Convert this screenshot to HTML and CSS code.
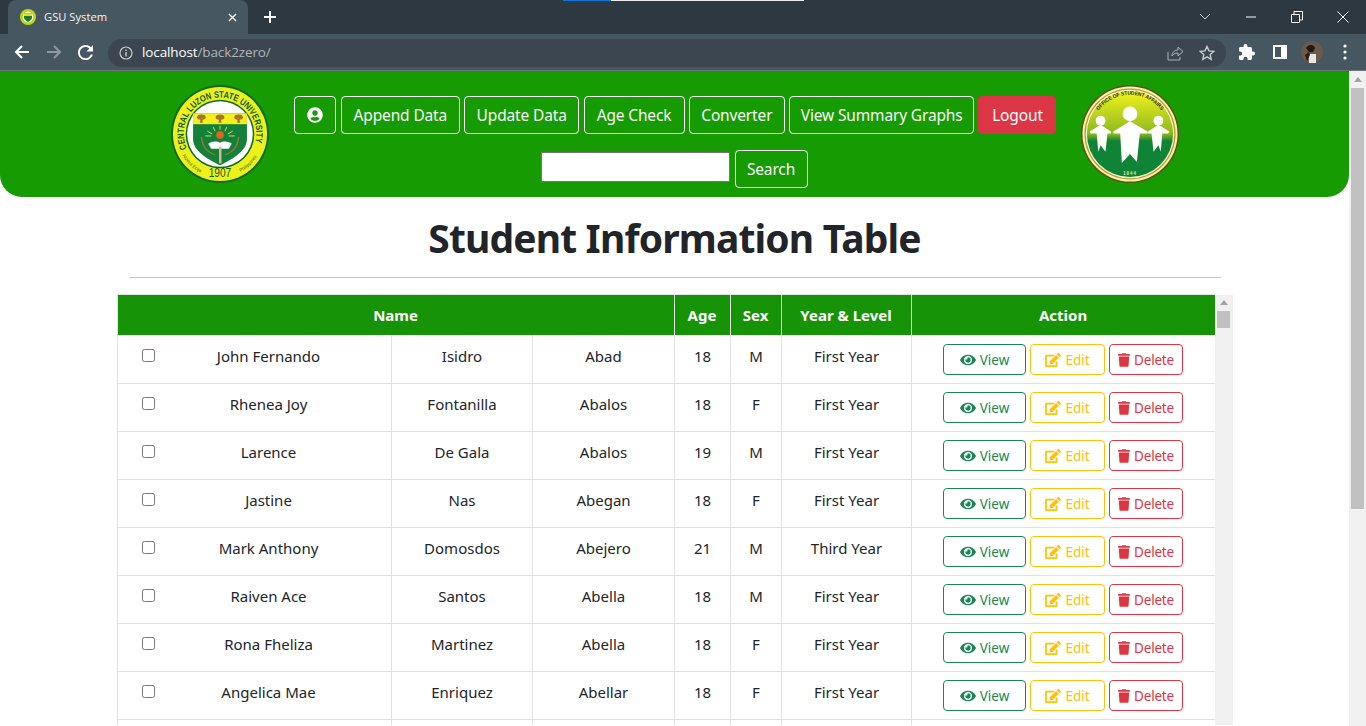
FILE: index.html
```html
<!DOCTYPE html>
<html lang="en">
<head>
<meta charset="utf-8">
<title>GSU System</title>
<link rel="stylesheet" href="styles.css">
</head>
<body>
<svg class="sprite" aria-hidden="true">
  <symbol id="i-eye" viewBox="0 0 576 512"><path fill="currentColor" d="M572.500 241.400C518.300 135.600 410.900 64 288 64S57.700 135.600 3.500 241.400a32.400 32.400 0 0 0 0 29.200C57.700 376.400 165.100 448 288 448s230.300-71.600 284.500-177.400a32.400 32.400 0 0 0 0-29.200zM288 400a144 144 0 1 1 144-144 143.900 143.900 0 0 1-144 144zm0-240a95.300 95.300 0 0 0-25.300 3.800 47.900 47.900 0 0 1-66.900 66.900A95.800 95.800 0 1 0 288 160z"/></symbol>
  <symbol id="i-edit" viewBox="0 0 576 512"><path fill="currentColor" d="M402.600 83.200l90.200 90.200c3.800 3.800 3.800 10 0 13.800L274.400 405.600l-92.800 10.300c-12.400 1.400-22.900-9.100-21.500-21.500l10.300-92.800L388.800 83.200c3.800-3.800 10-3.800 13.800 0zm162-22.900l-48.800-48.800c-15.200-15.200-39.900-15.200-55.200 0l-35.400 35.400c-3.800 3.800-3.800 10 0 13.800l90.200 90.200c3.800 3.800 10 3.800 13.800 0l35.400-35.400c15.200-15.300 15.200-40 0-55.200zM384 346.200V448H64V128h229.800c3.200 0 6.200-1.300 8.500-3.500l40-40c7.600-7.600 2.200-20.500-8.500-20.500H48C21.500 64 0 85.500 0 112v352c0 26.500 21.500 48 48 48h352c26.500 0 48-21.500 48-48V306.200c0-10.700-12.900-16-20.500-8.500l-40 40c-2.200 2.300-3.500 5.300-3.500 8.500z"/></symbol>
  <symbol id="i-trash" viewBox="0 0 448 512"><path fill="currentColor" d="M432 32H312l-9.400-18.700A24 24 0 0 0 281.100 0H166.800a23.700 23.700 0 0 0-21.400 13.300L136 32H16A16 16 0 0 0 0 48v32a16 16 0 0 0 16 16h416a16 16 0 0 0 16-16V48a16 16 0 0 0-16-16zM53.200 467a48 48 0 0 0 47.900 45h245.800a48 48 0 0 0 47.900-45L416 128H32z"/></symbol>
</svg>
<div class="chrome">
  <div class="load-strip"><span class="load-blue"></span><span class="load-white"></span></div>
  <div class="tabstrip">
    <div class="tab">
      <svg class="favicon" viewBox="0 0 16 16"><circle cx="8" cy="8" r="8" fill="#b5d90f"/><circle cx="8" cy="8" r="5.400" fill="#fff"/><path d="M4 4.500h8v4c0 2-2 3.400-4 4.400-2-1-4-2.400-4-4.400z" fill="#1c7a2c"/><rect x="4" y="4.500" width="8" height="2.500" fill="#e8d820"/></svg>
      <span class="tab-title">GSU System</span>
      <svg class="tab-close" viewBox="0 0 10 10"><path d="M1 1l8 8M9 1l-8 8" stroke="#fff" stroke-width="1.600"/></svg>
    </div>
    <svg class="new-tab" viewBox="0 0 12 12"><path d="M6 0v12M0 6h12" stroke="#fff" stroke-width="2"/></svg>
    <div class="win-controls">
      <svg class="win-icon chevron" viewBox="0 0 12 8"><path d="M1 1l5 5 5-5" fill="none" stroke="#c7ccd0" stroke-width="1"/></svg>
      <svg class="win-icon minimize" viewBox="0 0 12 12"><path d="M1 6h10" stroke="#fff" stroke-width="1"/></svg>
      <svg class="win-icon restore" viewBox="0 0 12 12"><path d="M.5 3.500h8v8h-8zM3 3V.5h8.500V9H9" fill="none" stroke="#fff" stroke-width="1"/></svg>
      <svg class="win-icon close" viewBox="0 0 12 12"><path d="M.5.5l11 11M11.500.5l-11 11" stroke="#fff" stroke-width="1"/></svg>
    </div>
  </div>
  <div class="toolbar">
    <svg class="nav-icon" viewBox="0 0 16 16"><path d="M15 8H2M8 2L2 8l6 6" fill="none" stroke="#fff" stroke-width="2"/></svg>
    <svg class="nav-icon" viewBox="0 0 16 16"><path d="M1 8h13M8 2l6 6-6 6" fill="none" stroke="#8f989e" stroke-width="2"/></svg>
    <svg class="nav-icon nav-reload" viewBox="4 4 16 16"><path fill="#fff" d="M17.650 6.350C16.200 4.900 14.210 4 12 4c-4.420 0-7.990 3.580-7.990 8s3.570 8 7.990 8c3.730 0 6.840-2.550 7.730-6h-2.080c-.82 2.330-3.040 4-5.650 4-3.310 0-6-2.690-6-6s2.690-6 6-6c1.660 0 3.140.69 4.220 1.780L13 11h7V4l-2.350 2.350z"/></svg>
    <div class="omnibox">
      <svg class="info-icon" viewBox="0 0 14 14"><circle cx="7" cy="7" r="6" fill="none" stroke="#c7ccd0" stroke-width="1.200"/><path d="M7 6v4.500M7 3.500v1.400" stroke="#c7ccd0" stroke-width="1.400"/></svg>
      <span class="url"><span class="url-host">localhost</span>/back2zero/</span>
      <svg class="omni-icon" viewBox="0 0 16 16"><path d="M1 7v8h12v-3" fill="none" stroke="#aab2b7" stroke-width="1"/><path d="M5 11c0-4 3-6 6-6V2l5 4.500-5 4.500V8c-3 0-5 1-6 3z" fill="none" stroke="#aab2b7" stroke-width="1"/></svg>
      <svg class="omni-icon" viewBox="0 0 16 16"><path d="M8 1.500l2 4.400 4.800.5-3.600 3.200 1 4.700L8 11.900l-4.200 2.400 1-4.700L1.200 6.400 6 5.900z" fill="none" stroke="#c7ccd0" stroke-width="1.400"/></svg>
    </div>
    <svg class="ext-icon" viewBox="2 1 21 21"><path fill="#fff" d="M20.500 11H19V7c0-1.100-.9-2-2-2h-4V3.500C13 2.120 11.880 1 10.500 1S8 2.120 8 3.500V5H4c-1.100 0-1.990.9-1.990 2v3.800H3.500c1.490 0 2.700 1.210 2.700 2.700s-1.210 2.700-2.700 2.700H2V20c0 1.100.9 2 2 2h3.800v-1.500c0-1.490 1.210-2.700 2.700-2.700 1.490 0 2.700 1.210 2.700 2.700V22H17c1.100 0 2-.9 2-2v-4h1.500c1.380 0 2.500-1.120 2.500-2.500S21.880 11 20.500 11z"/></svg>
    <svg class="side-icon" viewBox="0 0 14 14"><path d="M0 0h14v14H0zM2 2v10h6V2z" fill="#fff" fill-rule="evenodd"/></svg>
    <svg class="avatar" viewBox="0 0 22 22"><circle cx="11" cy="11" r="11" fill="#6b5a4a"/><path d="M5 7c2-4 8-4 9 0l-2 4H8z" fill="#1d1a18"/><path d="M8 22v-9h7v9z" fill="#e9e6e1"/><path d="M4 14l4-3 1 3-3 6z" fill="#26211e"/></svg>
    <svg class="menu-dots" viewBox="0 0 4 16"><circle cx="2" cy="2" r="1.600" fill="#fff"/><circle cx="2" cy="8" r="1.600" fill="#fff"/><circle cx="2" cy="14" r="1.600" fill="#fff"/></svg>
  </div>
</div>

<div class="viewport">
  <main class="page">
    <header class="site-header">
      <svg class="logo" viewBox="0 0 100 100">
        <defs>
          <path id="clsu-arc" d="M16.200 65A37 37 0 1 1 85.700 59.600"/>
          <path id="clsu-left" d="M11.900 72A44 44 0 0 0 30 89.200"/>
          <path id="clsu-right" d="M70 89.200A44 44 0 0 0 88.100 72"/>
        </defs>
        <circle cx="50" cy="50" r="50" fill="#0d6b26"/>
        <circle cx="50" cy="50" r="48" fill="#eef01a"/>
        <circle cx="50" cy="50" r="35" fill="#0d6b26"/>
        <circle cx="50" cy="50" r="33.500" fill="#fff"/>
        <text class="seal-text"><textPath href="#clsu-arc" textLength="140" lengthAdjust="spacingAndGlyphs">CENTRAL LUZON STATE UNIVERSITY</textPath></text>
        <text class="seal-small"><textPath href="#clsu-left" startOffset="50%" text-anchor="middle">Nueva Ecija</textPath></text>
        <text class="seal-small"><textPath href="#clsu-right" startOffset="50%" text-anchor="middle">Philippines</textPath></text>
        <text class="seal-year" x="38.500" y="94" textLength="23" lengthAdjust="spacingAndGlyphs">1907</text>
        <path d="M22.500 29h55v26c0 12-14 20-27.500 27C36.500 75 22.500 67 22.500 55z" fill="#14813a"/>
        <rect x="22.500" y="29" width="55" height="11" fill="#f3ee1c"/>
        <g fill="#a5752b"><path d="M26.500 33a4.500 3 0 0 1 9 0 4 2.500 0 0 1-3.500 2.500l.5 3h-3l.5-3a4 2.500 0 0 1-3.500-2.500z"/><path d="M45.500 33a4.500 3 0 0 1 9 0 4 2.500 0 0 1-3.500 2.500l.5 3h-3l.5-3a4 2.500 0 0 1-3.500-2.500z"/><path d="M64.500 33a4.500 3 0 0 1 9 0 4 2.500 0 0 1-3.500 2.500l.5 3h-3l.5-3a4 2.500 0 0 1-3.500-2.500z"/></g>
        <g stroke="#e9ec3a" stroke-width=".9"><path d="M50 41.500v4M43 43l2 4M57 43l-2 4M37 47l5 3M63 47l-5 3M35 52h6M65 52h-6"/></g>
        <circle cx="50" cy="51" r="3.800" fill="#e8641b"/>
        <path d="M38 60c4-3 9-3 12-1 3-2 8-2 12 1l-3 5H41z" fill="#fff"/>
        <path d="M49 63h2.500v17H49z" fill="#d3bb94"/>
        <path d="M31 53c1 10 6 16 14 18M69 53c-1 10-6 16-14 18" fill="none" stroke="#a5752b" stroke-width="1.300"/>
      </svg>
      <div class="nav-stack">
        <nav class="nav-row">
          <button class="btn btn-icon"><svg class="user-icon" viewBox="0 0 512 512"><path fill="#fff" d="M256 8C119 8 8 119 8 256s111 248 248 248 248-111 248-248S393 8 256 8zm0 96c48.600 0 88 39.400 88 88s-39.400 88-88 88-88-39.400-88-88 39.400-88 88-88zm0 344c-58.700 0-111.300-26.600-146.500-68.200 18.800-35.400 55.600-59.800 98.500-59.800 2.400 0 4.800.4 7.100 1.100 13 4.200 26.600 6.900 40.900 6.900 14.300 0 28-2.700 40.900-6.900 2.300-.7 4.700-1.100 7.100-1.100 42.900 0 79.700 24.400 98.500 59.800C367.300 421.400 314.700 448 256 448z"/></svg></button>
          <button class="btn btn-append">Append Data</button>
          <button class="btn btn-update">Update Data</button>
          <button class="btn btn-age">Age Check</button>
          <button class="btn btn-convert">Converter</button>
          <button class="btn btn-summary">View Summary Graphs</button>
          <button class="btn btn-logout">Logout</button>
        </nav>
        <form class="search-row">
          <input class="search-input" type="text" aria-label="Search">
          <button class="btn btn-search" type="button">Search</button>
        </form>
      </div>
      <svg class="logo" viewBox="0 0 100 100">
        <defs>
          <path id="osa-arc" d="M10 50A40 40 0 0 1 90 50"/>
          <linearGradient id="osa-grad" x1="0" x2="0" y1="0" y2="1"><stop offset="0" stop-color="#f4f21c"/><stop offset=".5" stop-color="#8ab81e"/><stop offset=".58" stop-color="#0f8436"/><stop offset="1" stop-color="#0f8436"/></linearGradient>
        </defs>
        <circle cx="50" cy="50" r="50" fill="#5e5216"/>
        <circle cx="50" cy="50" r="48.500" fill="#f6f3b0"/>
        <circle cx="50" cy="50" r="46.500" fill="#b99f20"/>
        <circle cx="50" cy="50" r="45.200" fill="#fbfadc"/>
        <circle cx="50" cy="50" r="44" fill="url(#osa-grad)"/>
        <text class="osa-text"><textPath href="#osa-arc" startOffset="50%" text-anchor="middle" textLength="74" lengthAdjust="spacingAndGlyphs">OFFICE OF STUDENT AFFAIRS</textPath></text>
        <text class="osa-year" x="50" y="91.500" text-anchor="middle">1944</text>
        <g class="osa-people" fill="#fff">
          <circle cx="50" cy="26" r="7.500"/>
          <path d="M50 33.500L33 44v2h7l1.700 30L50 67l7 8 3-29h8v-2z"/>
          <circle cx="20" cy="33" r="5"/>
          <path d="M20 37L9 44l1 2h6l1.600 18.500L20 58l5 6.500L27 46h3.500v-2z"/>
          <circle cx="79" cy="33" r="5"/>
          <path d="M79 37l11 7-1 2h-6l-1.600 18.500L79 58l-5 6.500L72 46h-3.500v-2z"/>
        </g>
      </svg>
    </header>

    <h1 class="page-title">Student Information Table</h1>
    <hr class="divider">

    <section class="table-wrap">
      <table class="students">
        <colgroup>
          <col class="c-check"><col class="c-first"><col class="c-mid"><col class="c-last"><col class="c-age"><col class="c-sex"><col class="c-year"><col class="c-action">
        </colgroup>
        <thead>
          <tr><th colspan="4">Name</th><th>Age</th><th>Sex</th><th>Year &amp; Level</th><th class="th-last">Action</th></tr>
        </thead>
        <tbody>
          <tr><td class="td-check"><input type="checkbox" class="check"></td><td class="td-first">John Fernando</td><td>Isidro</td><td>Abad</td><td>18</td><td>M</td><td>First Year</td><td class="td-action"><div class="actions"><a class="act act-view"><svg class="act-icon icon-wide"><use href="#i-eye"/></svg>View</a><a class="act act-edit"><svg class="act-icon icon-wide"><use href="#i-edit"/></svg>Edit</a><a class="act act-delete"><svg class="act-icon icon-trash"><use href="#i-trash"/></svg>Delete</a></div></td></tr>
          <tr><td class="td-check"><input type="checkbox" class="check"></td><td class="td-first">Rhenea Joy</td><td>Fontanilla</td><td>Abalos</td><td>18</td><td>F</td><td>First Year</td><td class="td-action"><div class="actions"><a class="act act-view"><svg class="act-icon icon-wide"><use href="#i-eye"/></svg>View</a><a class="act act-edit"><svg class="act-icon icon-wide"><use href="#i-edit"/></svg>Edit</a><a class="act act-delete"><svg class="act-icon icon-trash"><use href="#i-trash"/></svg>Delete</a></div></td></tr>
          <tr><td class="td-check"><input type="checkbox" class="check"></td><td class="td-first">Larence</td><td>De Gala</td><td>Abalos</td><td>19</td><td>M</td><td>First Year</td><td class="td-action"><div class="actions"><a class="act act-view"><svg class="act-icon icon-wide"><use href="#i-eye"/></svg>View</a><a class="act act-edit"><svg class="act-icon icon-wide"><use href="#i-edit"/></svg>Edit</a><a class="act act-delete"><svg class="act-icon icon-trash"><use href="#i-trash"/></svg>Delete</a></div></td></tr>
          <tr><td class="td-check"><input type="checkbox" class="check"></td><td class="td-first">Jastine</td><td>Nas</td><td>Abegan</td><td>18</td><td>F</td><td>First Year</td><td class="td-action"><div class="actions"><a class="act act-view"><svg class="act-icon icon-wide"><use href="#i-eye"/></svg>View</a><a class="act act-edit"><svg class="act-icon icon-wide"><use href="#i-edit"/></svg>Edit</a><a class="act act-delete"><svg class="act-icon icon-trash"><use href="#i-trash"/></svg>Delete</a></div></td></tr>
          <tr><td class="td-check"><input type="checkbox" class="check"></td><td class="td-first">Mark Anthony</td><td>Domosdos</td><td>Abejero</td><td>21</td><td>M</td><td>Third Year</td><td class="td-action"><div class="actions"><a class="act act-view"><svg class="act-icon icon-wide"><use href="#i-eye"/></svg>View</a><a class="act act-edit"><svg class="act-icon icon-wide"><use href="#i-edit"/></svg>Edit</a><a class="act act-delete"><svg class="act-icon icon-trash"><use href="#i-trash"/></svg>Delete</a></div></td></tr>
          <tr><td class="td-check"><input type="checkbox" class="check"></td><td class="td-first">Raiven Ace</td><td>Santos</td><td>Abella</td><td>18</td><td>M</td><td>First Year</td><td class="td-action"><div class="actions"><a class="act act-view"><svg class="act-icon icon-wide"><use href="#i-eye"/></svg>View</a><a class="act act-edit"><svg class="act-icon icon-wide"><use href="#i-edit"/></svg>Edit</a><a class="act act-delete"><svg class="act-icon icon-trash"><use href="#i-trash"/></svg>Delete</a></div></td></tr>
          <tr><td class="td-check"><input type="checkbox" class="check"></td><td class="td-first">Rona Fheliza</td><td>Martinez</td><td>Abella</td><td>18</td><td>F</td><td>First Year</td><td class="td-action"><div class="actions"><a class="act act-view"><svg class="act-icon icon-wide"><use href="#i-eye"/></svg>View</a><a class="act act-edit"><svg class="act-icon icon-wide"><use href="#i-edit"/></svg>Edit</a><a class="act act-delete"><svg class="act-icon icon-trash"><use href="#i-trash"/></svg>Delete</a></div></td></tr>
          <tr><td class="td-check"><input type="checkbox" class="check"></td><td class="td-first">Angelica Mae</td><td>Enriquez</td><td>Abellar</td><td>18</td><td>F</td><td>First Year</td><td class="td-action"><div class="actions"><a class="act act-view"><svg class="act-icon icon-wide"><use href="#i-eye"/></svg>View</a><a class="act act-edit"><svg class="act-icon icon-wide"><use href="#i-edit"/></svg>Edit</a><a class="act act-delete"><svg class="act-icon icon-trash"><use href="#i-trash"/></svg>Delete</a></div></td></tr>
          <tr><td class="td-check"></td><td></td><td></td><td></td><td></td><td></td><td></td><td></td></tr>
        </tbody>
      </table>
      <div class="inner-scroll"><span class="arrow"></span><span class="inner-thumb"></span></div>
    </section>
  </main>
  <aside class="page-scroll"><span class="arrow"></span><span class="page-thumb"></span></aside>
</div>
</body>
</html>
```

FILE: styles.css
```css
* { box-sizing: border-box; }
html, body { margin: 0; height: 726px; overflow: hidden; background: #fff; }
body { display: flex; flex-direction: column; font-family: "Noto Sans", "Open Sans", sans-serif; color: #212529; }
.sprite { position: absolute; width: 0; height: 0; }

/* browser chrome */
.chrome { height: 71px; flex: none; background: #475761; position: relative; font-family: "Open Sans", "Noto Sans", sans-serif; border-bottom: 1px solid #6e7478; }
.load-strip { position: absolute; top: 0; left: 563px; display: flex; height: 1px; z-index: 2; }
.load-blue { width: 48px; background: #0a78d8; }
.load-white { width: 193px; background: #e9ecee; }
.tabstrip { height: 34px; background: #2d3840; display: flex; align-items: center; padding-left: 8px; }
.tab { width: 240px; height: 34px; background: #475761; border-radius: 8px 8px 0 0; display: flex; align-items: center; padding: 0 0 0 12px; }
.favicon { width: 16px; height: 16px; flex: none; }
.tab-title { margin: 0 0 2px 8px; color: #f2f4f5; font-size: 11.200px; flex: 1; white-space: nowrap; }
.tab-close { width: 9px; height: 9px; margin-right: 11px; flex: none; }
.new-tab { width: 12px; height: 12px; margin-left: 16px; }
.win-controls { margin-left: auto; display: flex; align-items: center; height: 34px; }
.win-icon { width: 12px; height: 12px; flex: none; }
.chevron { margin-right: 34px; height: 8px; }
.minimize { margin-right: 34px; }
.restore { margin-right: 34px; }
.close { margin-right: 17px; }
.toolbar { height: 36px; display: flex; align-items: center; padding: 0 0 0 14px; }
.nav-icon { width: 16px; height: 16px; margin-right: 16px; flex: none; }
.nav-icon.nav-reload { width: 15px; height: 15px; margin: 0 15px 0 0; }
.omnibox { width: 1118px; height: 28px; margin-top: 1px; background: #3b4650; border-radius: 14px; display: flex; align-items: center; padding: 0 11px; flex: none; }
.info-icon { width: 14px; height: 14px; flex: none; }
.url { margin: 0 0 2px 9px; font-size: 13.500px; color: #aeb6bb; flex: 1; white-space: nowrap; letter-spacing: -.12px; }
.url-host { color: #fff; }
.omni-icon { width: 16px; height: 16px; margin-left: 16px; flex: none; }
.ext-icon { width: 16px; height: 16px; margin-left: 13px; flex: none; }
.side-icon { width: 14px; height: 14px; margin-left: 18px; flex: none; }
.avatar { width: 22px; height: 22px; margin-left: 14px; flex: none; }
.menu-dots { width: 4px; height: 16px; margin-left: 20px; flex: none; }

/* page */
.viewport { flex: 1; display: flex; min-height: 0; }
.page { width: 1349px; flex: none; overflow: hidden; }
.page-scroll { width: 17px; flex: none; background: #f1f1f1; display: flex; flex-direction: column; align-items: center; padding-top: 6px; }
.arrow { width: 0; height: 0; border: 4px solid transparent; border-top: 0; border-bottom: 5px solid #a3a3a3; flex: none; }
.page-thumb { width: 13px; height: 421px; background: #c1c1c1; margin-top: 6px; }

.site-header { height: 126px; background: #179b03; border-radius: 0 0 22px 22px; display: flex; justify-content: center; gap: 25px; padding-top: 14px; }
.logo { width: 98px; height: 98px; flex: none; }
.seal-text { font: 700 9.500px "Liberation Sans", sans-serif; fill: #0d5d22; }
.seal-small { font: 400 4.800px "Liberation Sans", sans-serif; fill: #2c6b22; }
.seal-year { font: 400 13.500px "Liberation Sans", sans-serif; fill: #0d5d22; }
.osa-text { font: 700 5.500px "Liberation Sans", sans-serif; fill: #2b2d12; }
.osa-year { font: 700 4.500px "Liberation Sans", sans-serif; fill: #e8e6a8; letter-spacing: 1px; }
.osa-people { transform: translateY(3.500px); }

.nav-stack { width: 762px; padding-top: 11px; display: flex; flex-direction: column; align-items: center; gap: 16px; flex: none; }
.nav-row { display: flex; gap: 4.330px; margin-left: 1px; }
.btn { height: 38px; padding: 1px 0 0; background: transparent; border: 1px solid #f8f9fa; border-radius: 4px; color: #f8f9fa; font: 400 15.500px/1 "Noto Sans", "Open Sans", sans-serif; letter-spacing: -.15px; display: flex; align-items: center; justify-content: center; white-space: nowrap; }
.btn-icon { width: 42px; padding: 0; margin-right: 1px; }
.user-icon { width: 16px; height: 16px; }
.btn-append { width: 119px; }
.btn-update { width: 115px; }
.btn-age { width: 101px; }
.btn-convert { width: 96px; }
.btn-summary { width: 185px; }
.btn-logout { width: 78px; background: #dc3545; border-color: #dc3545; color: #fff; }
.search-row { display: flex; align-items: flex-start; gap: 5px; margin: 0 1px 0 0; }
.search-input { width: 189px; height: 30px; margin-top: 2px; background: #fff; border: 1px solid #767676; padding: 1px 2px; }
.btn-search { width: 73px; }

.page-title { margin: 17px 0 0; text-align: center; font-size: 39px; line-height: 48px; font-weight: 700; letter-spacing: -.85px; }
.divider { width: 1092px; height: 1px; margin: 15px auto 16px; border: 0; background: #c8c9ca; }

.table-wrap { width: 1116px; margin: 0 auto; padding-top: 1px; display: flex; height: 431px; overflow: hidden; border-left: 1px solid #dee2e6; }
.students { width: 1097px; table-layout: fixed; border-collapse: separate; border-spacing: 0; font-size: 15px; flex: none; align-self: flex-start; border-top: 1px solid #dee2e6; margin-top: -1px; }
.c-check { width: 62px; }
.c-first { width: 212px; }
.c-mid { width: 141px; }
.c-last { width: 142px; }
.c-age { width: 56px; }
.c-sex { width: 51px; }
.c-year { width: 130px; }
.c-action { width: 303px; }
.students th { height: 40px; background: #169306; color: #fff; font-weight: 700; font-size: 15px; border-right: 1px solid #dde5dc; text-align: center; vertical-align: middle; padding: 0; }
.students th.th-last { border-right: 0; }
.students td { height: 48px; padding: 8px 0 7px 1px; text-align: center; vertical-align: top; border-bottom: 1px solid #dee2e6; border-right: 1px solid #dee2e6; line-height: 24px; }
.students tbody tr:first-child td { height: 49px; padding-top: 9px; }
.students td:last-child { border-right: 0; padding-left: 0; }
.students td.td-check { border-right: 0; text-align: left; padding-left: 24px; line-height: 0; }
.students td.td-first { padding-right: 34px; }
.check { width: 13px; height: 13px; margin: 5px 0 0; }
.actions { display: flex; justify-content: center; gap: 4px; }
.act { height: 31px; padding-top: 2px; border: 1px solid; border-radius: 4px; font-size: 13.500px; display: flex; align-items: center; justify-content: center; line-height: 1; gap: 4px; }
.act-icon { height: 14px; flex: none; margin-top: -2px; }
.icon-wide { width: 16px; }
.icon-trash { width: 12px; }
.act-view { width: 83px; color: #198754; }
.act-edit { width: 75px; color: #ffc107; }
.act-delete { width: 74px; color: #dc3545; letter-spacing: -.2px; }
.inner-scroll { width: 18px; flex: none; background: #f1f1f1; display: flex; flex-direction: column; align-items: center; padding-top: 5px; }
.inner-thumb { width: 13px; height: 17px; background: #c1c1c1; margin-top: 6px; }
```
